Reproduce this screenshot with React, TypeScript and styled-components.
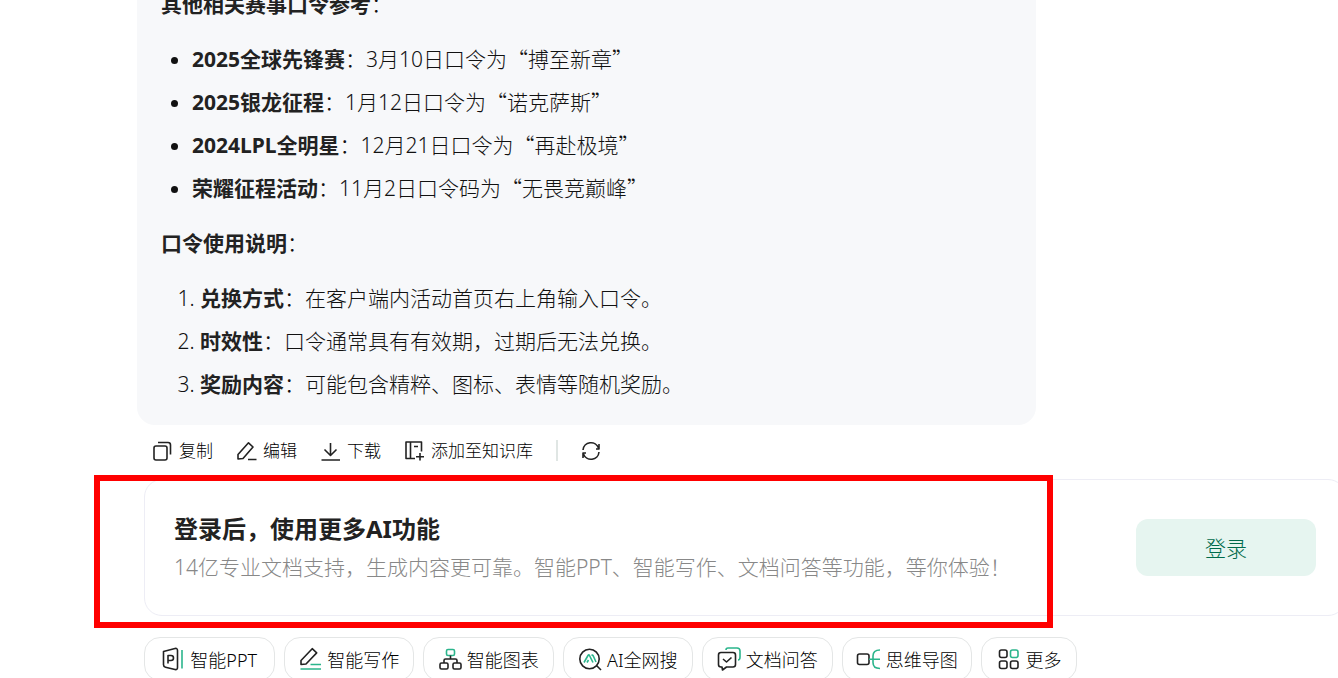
import React from "react";
import styled, { createGlobalStyle } from "styled-components";

const ink = "#222";
const green = "#2bb58c";

const GlobalStyle = createGlobalStyle`
  * { box-sizing: border-box; }
  body {
    margin: 0;
    background: #fff;
    color: ${ink};
    font-family: "Noto Sans", "Noto Sans CJK SC", sans-serif;
    font-weight: 300;
  }
  button { font: inherit; color: inherit; cursor: pointer; }
`;

const Page = styled.main`
  height: 100vh;
  overflow: hidden;
  padding-left: 137px;
`;

const Answer = styled.article`
  max-width: 899px;
  margin-top: -36px;
  padding: 24px;
  display: flex;
  flex-direction: column;
  gap: 22px;
  background: #f7f8fa;
  border-radius: 18px;
  color: #111;
  font-size: 21px;
  line-height: 33px;

  strong { font-weight: 700; color: ${ink}; }
`;

const Paragraph = styled.p`
  margin: 0;
`;

const listLayout = `
  margin: 0;
  display: flex;
  flex-direction: column;
  gap: 10px;
`;

const BulletList = styled.ul`
  ${listLayout}
  padding-left: 31px;
`;

const NumberList = styled.ol`
  ${listLayout}
  padding-left: 39px;
`;

const Quote = styled.q`
  font-family: "Noto Sans CJK SC", sans-serif;
  line-height: 1;
  quotes: "“" "”";
`;

const Actions = styled.div`
  height: 54px;
  padding: 0 15px 3px;
  display: flex;
  align-items: center;
  gap: 23px;
`;

const ActionButton = styled.button`
  padding: 0;
  border: 0;
  background: none;
  color: #000;
  display: flex;
  align-items: center;
  gap: 6px;
  font-size: 17px;
  line-height: 24px;
  white-space: nowrap;
`;

const Divider = styled.span`
  width: 2px;
  height: 21px;
  background: #e0e6e4;
`;

const LoginBanner = styled.section`
  position: relative;
  margin: 0 -8px 0 7px;
  height: 137px;
  padding: 0 29px;
  display: flex;
  align-items: center;
  justify-content: space-between;
  border: 1px solid #ededf5;
  border-radius: 18px;
`;

const Highlight = styled.div`
  position: absolute;
  inset: -5px 292px -13px -51px;
  border: 6px solid #f00;
  pointer-events: none;
`;

const BannerTitle = styled.h2`
  margin: 0;
  font-size: 24px;
  line-height: 38px;
  font-weight: 700;
`;

const BannerText = styled.p`
  margin: 0;
  font-size: 21px;
  line-height: 38px;
  color: #888;
  white-space: nowrap;
`;

const LoginButton = styled.button`
  width: 180px;
  height: 57px;
  padding: 0 0 2px;
  border: 0;
  border-radius: 12px;
  background: #e6f5f0;
  color: #006b4c;
  font-size: 21px;
`;

const Tools = styled.nav`
  max-width: 940px;
  padding: 21px 0 0 7px;
  display: flex;
  gap: 9px;
`;

const ToolChip = styled.button<{ $compact?: boolean }>`
  flex: ${(p) => (p.$compact ? "0 0 96px" : "1 1 0")};
  height: 44px;
  padding: 0;
  display: flex;
  align-items: center;
  justify-content: center;
  gap: 5px;
  border: 1px solid #e4e6e6;
  border-radius: 16px;
  background: #fff;
  color: #000;
  font-size: 18px;
  white-space: nowrap;
`;

const Icon = styled.svg`
  flex: none;
  fill: none;
  stroke: ${ink};
  stroke-width: 1.6;
  stroke-linejoin: round;

  .accent { stroke: ${green}; }
`;

const CopyIcon = () => (
  <Icon width="21" height="22" viewBox="0 0 21 22">
    <rect x="2" y="6" width="13" height="14" rx="2" />
    <path d="M6 2.5h10a2.5 2.5 0 0 1 2.5 2.5v9.5" />
  </Icon>
);

const EditIcon = () => (
  <Icon width="21" height="22" viewBox="0 0 21 22">
    <path d="M2 19v-4.500L12.500 2.800l4.500 4.200L7 18.500zM12 19.500h8.500" />
  </Icon>
);

const DownloadIcon = () => (
  <Icon width="21" height="22" viewBox="0 0 21 22">
    <path d="M10.500 3v12M4.500 9.500l6 6 6-6M1.500 20h18.500" />
  </Icon>
);

const LibraryIcon = () => (
  <Icon width="21" height="22" viewBox="0 0 21 22">
    <path d="M11 18.500H2v-16.500h15.500v9.500M6.500 2v16.500M10 6.500h4M16 13v7.500M12 16.700h8" />
  </Icon>
);

const RefreshIcon = () => (
  <Icon width="20" height="20" viewBox="0 0 20 20">
    <path d="M2 9a8 8 0 0 1 15.500-2M18 11a8 8 0 0 1-15.500 2M18 3v5h-3M2 17v-5h3" />
  </Icon>
);

const SlidesIcon = () => (
  <Icon width="24" height="24" viewBox="0 0 24 24">
    <path d="M2.500 4.500L14 1.500q2.500-.5 2.500 2v17q0 2.500-2.500 2l-9.500-2.200q-2-.5-2-2.500z" />
    <path d="M7 16.500V8.500h3q2.500 0 2.500 2.500t-2.500 2.500H7" />
    <path className="accent" d="M21 3v18.500" />
  </Icon>
);

const WriteIcon = () => (
  <Icon width="24" height="24" viewBox="0 0 24 24">
    <path d="M3 17.500v-4L14.200 1.700l4.500 4.200L8 17z" />
    <path className="accent" d="M12.500 17.500H23M2.500 22H23" />
  </Icon>
);

const DiagramIcon = () => (
  <Icon width="24" height="24" viewBox="0 0 24 24">
    <rect className="accent" x="8.500" y="2.500" width="8" height="6" rx="1.500" />
    <rect x="2" y="16" width="8" height="6" rx="1.500" />
    <rect x="15" y="16" width="8" height="6" rx="1.500" />
    <path d="M12.500 8.500v3.500M6 16v-2.500q0-1.500 1.500-1.500h10q1.500 0 1.500 1.500V16" />
  </Icon>
);

const SearchIcon = () => (
  <Icon width="24" height="24" viewBox="0 0 24 24">
    <circle cx="11.500" cy="12" r="9.700" />
    <path d="M18.500 18.500l4.500 4.500" />
    <path className="accent" d="M6 15.500l4-7q.8-1.200 1.500 0l3.500 7M9 15.500l1.500-2.500M13.500 8.500q1-1 1.800.5l2.700 6" />
  </Icon>
);

const ChatIcon = () => (
  <Icon width="24" height="24" viewBox="0 0 24 24">
    <path className="accent" d="M9 3q0-2 2-2h9q3 0 3 3v6q0 3-2 3" />
    <path d="M4 5.500h12q2.500 0 2.500 2.500v9.500q0 2.500-2.500 2.500H9.500L5.500 23l-.5-3H4q-2.500 0-2.500-2.500V8Q1.500 5.500 4 5.500zM6 12l3.500 3 5-4.500" />
  </Icon>
);

const MindMapIcon = () => (
  <Icon width="25" height="24" viewBox="0 0 25 24">
    <rect x="1.500" y="7" width="11.500" height="10.500" rx="2" />
    <path className="accent" d="M13 12.200h11M24 3q-7 0-7 6v6.500q0 6 7 6" />
  </Icon>
);

const GridIcon = () => (
  <Icon width="24" height="24" viewBox="0 0 24 24">
    <rect x="2.500" y="3" width="7.500" height="7.500" rx="2" />
    <rect className="accent" x="13.500" y="3" width="7.500" height="7.500" rx="2" />
    <rect x="2.500" y="14" width="7.500" height="7.500" rx="2" />
    <rect x="13.500" y="14" width="7.500" height="7.500" rx="2" />
  </Icon>
);

const codes = [
  { name: "2025全球先锋赛", text: "3月10日口令为", code: "搏至新章" },
  { name: "2025银龙征程", text: "1月12日口令为", code: "诺克萨斯" },
  { name: "2024LPL全明星", text: "12月21日口令为", code: "再赴极境" },
  { name: "荣耀征程活动", text: "11月2日口令码为", code: "无畏竞巅峰" },
];

const notes = [
  { name: "兑换方式", text: "在客户端内活动首页右上角输入口令。" },
  { name: "时效性", text: "口令通常具有有效期，过期后无法兑换。" },
  { name: "奖励内容", text: "可能包含精粹、图标、表情等随机奖励。" },
];

const actions = [
  { label: "复制", Glyph: CopyIcon },
  { label: "编辑", Glyph: EditIcon },
  { label: "下载", Glyph: DownloadIcon },
  { label: "添加至知识库", Glyph: LibraryIcon },
];

const tools = [
  { label: "智能PPT", Glyph: SlidesIcon },
  { label: "智能写作", Glyph: WriteIcon },
  { label: "智能图表", Glyph: DiagramIcon },
  { label: "AI全网搜", Glyph: SearchIcon },
  { label: "文档问答", Glyph: ChatIcon },
  { label: "思维导图", Glyph: MindMapIcon },
  { label: "更多", Glyph: GridIcon, compact: true },
];

export default function App() {
  return (
    <>
      <GlobalStyle />
      <Page lang="zh-CN">
        <Answer>
          <Paragraph><strong>其他相关赛事口令参考</strong>：</Paragraph>
          <BulletList>
            {codes.map((c) => (
              <li key={c.name}>
                <strong>{c.name}</strong>：{c.text}<Quote>{c.code}</Quote>
              </li>
            ))}
          </BulletList>
          <Paragraph><strong>口令使用说明</strong>：</Paragraph>
          <NumberList>
            {notes.map((n) => (
              <li key={n.name}>
                <strong>{n.name}</strong>：{n.text}
              </li>
            ))}
          </NumberList>
        </Answer>
        <Actions>
          {actions.map(({ label, Glyph }) => (
            <ActionButton key={label}><Glyph />{label}</ActionButton>
          ))}
          <Divider />
          <ActionButton aria-label="刷新"><RefreshIcon /></ActionButton>
        </Actions>
        <LoginBanner>
          <div>
            <BannerTitle>登录后，使用更多AI功能</BannerTitle>
            <BannerText>14亿专业文档支持，生成内容更可靠。智能PPT、智能写作、文档问答等功能，等你体验！</BannerText>
          </div>
          <LoginButton>登录</LoginButton>
          <Highlight />
        </LoginBanner>
        <Tools>
          {tools.map(({ label, Glyph, compact }) => (
            <ToolChip key={label} $compact={compact}><Glyph />{label}</ToolChip>
          ))}
        </Tools>
      </Page>
    </>
  );
}
